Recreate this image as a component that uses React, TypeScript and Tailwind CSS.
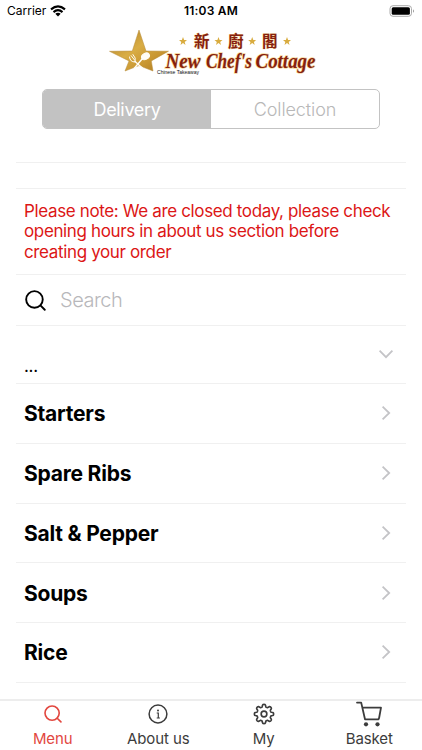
import { useState } from "react";
import clsx from "clsx";

interface IconProps {
  className?: string;
}

const categories = ["Starters", "Spare Ribs", "Salt & Pepper", "Soups", "Rice"];

// closed outline with eight soft teeth around a 24x24 centre
const gearPath = (() => {
  const points: string[] = [];
  for (let i = 0; i < 144; i++) {
    const angle = (i / 144) * Math.PI * 2;
    const wave = Math.tanh(2 * Math.cos(angle * 8)) / Math.tanh(2);
    const r = 9.1 + wave * 1.35;
    points.push(`${(12 + r * Math.sin(angle)).toFixed(2)} ${(12 - r * Math.cos(angle)).toFixed(2)}`);
  }
  return `M${points.join("L")}Z`;
})();

const SearchIcon = ({ className }: IconProps) => (
  <svg viewBox="0 0 20 20" fill="none" stroke="currentColor" strokeWidth="1.8" strokeLinecap="round" className={className}>
    <circle cx="9" cy="9" r="7.9" />
    <path d="M14.7 14.7L18.8 18.8" />
  </svg>
);

const InfoIcon = ({ className }: IconProps) => (
  <svg viewBox="0 0 20 20" fill="none" stroke="currentColor" strokeWidth="1.5" className={className}>
    <circle cx="10" cy="10" r="8.9" />
    <path d="M8.7 9H10.3V14M8.7 14H11.9" strokeWidth="1.2" />
    <circle cx="10" cy="6.4" r="1" fill="currentColor" stroke="none" />
  </svg>
);

const GearIcon = ({ className }: IconProps) => (
  <svg viewBox="0 0 24 24" fill="none" stroke="currentColor" strokeWidth="1.8" strokeLinejoin="round" className={className}>
    <path d={gearPath} />
    <circle cx="12" cy="12" r="3.1" />
  </svg>
);

const CartIcon = ({ className }: IconProps) => (
  <svg viewBox="0 0 26 26" fill="none" stroke="currentColor" strokeWidth="1.8" strokeLinejoin="round" strokeLinecap="round" className={className}>
    <path d="M1 1.6H5.2L9 18.3H22.5M6.4 6.7H25L23.1 17Q22.9 18.3 21.6 18.3" />
    <circle cx="10" cy="23.3" r="2.1" fill="currentColor" stroke="none" />
    <circle cx="21.5" cy="23.3" r="2.1" fill="currentColor" stroke="none" />
  </svg>
);

const Chevron = ({ className }: IconProps) => (
  <svg viewBox="0 0 16 16" fill="none" stroke="#c4c4c7" strokeWidth="1.8" className={className}>
    <path d="M4.6 1.6L11.2 8L4.6 14.4" />
  </svg>
);

const Logo = () => (
  <svg viewBox="-4 0 220 54" className="h-[54px] w-[220px]">
    <defs>
      <linearGradient id="gold" x1="0" y1="0" x2="1" y2="1">
        <stop offset="0" stopColor="#a87922" />
        <stop offset="0.45" stopColor="#d9ad45" />
        <stop offset="0.7" stopColor="#c99732" />
        <stop offset="1" stopColor="#aa781e" />
      </linearGradient>
    </defs>
    <path d="M34 3L41 24L63.5 24.2L46.3 33.9L48 44L34 38.6L20 44L24 33.9L4.5 24.3L27.3 24Z" fill="url(#gold)" stroke="#b68b38" strokeWidth="0.5" />
    <g fill="#fffdf6" stroke="#fffdf6" strokeLinecap="round">
      <ellipse cx="40.5" cy="29.3" rx="4.2" ry="3" transform="rotate(-30 40.5 29.3)" />
      <path d="M37.5 31.5L29.5 41" strokeWidth="1.4" />
      <path d="M30 34.5L38.5 42" strokeWidth="1.4" />
      <path d="M24.5 30Q25 35 30 35Q31.5 31 28 27.5M26.2 28.7L29.5 33" fill="none" strokeWidth="1" />
    </g>
    {[78, 113.5, 147.2, 182].map((x) => (
      <path key={x} transform={`translate(${x} 14.2)`} d="M0 -4.2L1.1 -1.2L4 -1.2L1.7 0.7L2.5 3.7L0 1.9L-2.5 3.7L-1.7 0.7L-4 -1.2L-1.1 -1.2Z" fill="#d9ac3f" />
    ))}
    <g fill="#86200f" stroke="#f6d797" strokeWidth="0.7" paintOrder="stroke">
      <g className="font-['Noto_Sans_CJK_TC',sans-serif] text-[15.5px] font-bold">
        <text x="89" y="20.3">新</text>
        <text x="123" y="20.3">廚</text>
        <text x="157" y="20.3">閣</text>
      </g>
      <g className="font-['Liberation_Serif',serif] text-[20.5px] font-bold italic" strokeWidth="1.4">
        <text x="60.5" y="41.2" textLength="35" lengthAdjust="spacingAndGlyphs">New</text>
        <text x="101" y="41.2" textLength="46" lengthAdjust="spacingAndGlyphs">Chef's</text>
        <text x="150.5" y="41.2" textLength="60" lengthAdjust="spacingAndGlyphs">Cottage</text>
      </g>
    </g>
    <text x="52" y="46.6" textLength="42" fill="#111" className="font-['Liberation_Sans',sans-serif] text-[5px]">Chinese Takeaway</text>
  </svg>
);

const StatusBar = () => (
  <div className="grid h-[22px] grid-cols-3 items-center px-[7px] text-[12px]">
    <div className="flex items-center gap-1">
      <span>Carrier</span>
      <svg viewBox="0 0 16 12" className="h-[12px] w-4">
        <g fill="none" stroke="#000" strokeWidth="2.1">
          <path d="M1 4.4Q8 -1.7 15 4.4" />
          <path d="M3.5 7.1Q8 3.1 12.5 7.1" />
        </g>
        <path d="M5.3 8.8Q8 6.8 10.7 8.8L8 11.5Z" />
      </svg>
    </div>
    <span className="text-center font-semibold tracking-[0.2px]">11:03 AM</span>
    <svg viewBox="0 0 26 12" className="h-3 w-[26px] justify-self-end">
      <rect x="1" y="0.7" width="21.5" height="10.6" rx="3" fill="#fff" stroke="#aaa" />
      <rect x="2.7" y="2.3" width="18.2" height="7.4" rx="1.5" />
      <path d="M24 4.2Q26 6 24 7.8Z" fill="#999" />
    </svg>
  </div>
);

const tabs = [
  { name: "Menu", icon: <SearchIcon className="h-[18px] w-[18px]" /> },
  { name: "About us", icon: <InfoIcon className="h-5 w-5" /> },
  { name: "My", icon: <GearIcon className="h-[22px] w-[22px]" /> },
  { name: "Basket", icon: <CartIcon className="h-[26px] w-[26px]" /> },
];

export default function App() {
  const [mode, setMode] = useState("Delivery");
  const [activeTab, setActiveTab] = useState("Menu");

  return (
    <div className="flex h-[750px] w-[422px] flex-col overflow-hidden bg-white font-[Inter,sans-serif] text-black">
      <StatusBar />
      <header className="flex flex-col items-center">
        <div className="mt-[5px]">
          <Logo />
        </div>
        <div className="mt-[8px] grid h-10 w-[338px] grid-cols-2 overflow-hidden rounded-[5px] border border-[#c3c3c3]">
          {["Delivery", "Collection"].map((name) => (
            <button
              key={name}
              onClick={() => setMode(name)}
              className={clsx("text-[18px]", mode === name ? "bg-[#c2c2c2] font-normal tracking-[-0.35px] text-white" : "font-light tracking-[-0.1px] text-[#b8b8b8]")}
            >
              {name}
            </button>
          ))}
        </div>
      </header>

      <main className="mx-4 mt-[33px] flex-1 overflow-hidden border-t border-[#f0f0f0]">
        <div className="h-[25px]" />
        <p className="h-[87px] whitespace-nowrap border-y border-[#f0f0f0] px-2 pt-[12px] text-[17px] leading-[20.3px] tracking-[-0.36px] text-[#dc1616]">
          Please note: We are closed today, please check
          <br />
          opening hours in about us section before
          <br />
          creating your order
        </p>
        <div className="flex h-[51px] items-center border-b border-[#f0f0f0] pl-[9px]">
          <SearchIcon className="h-[21px] w-[21px]" />
          <input placeholder="Search" className="ml-[14px] w-60 text-[20px] font-light tracking-[-0.5px] outline-none placeholder:text-[#b8b8bb]" />
        </div>
        <div className="flex h-[58px] justify-between border-b border-[#f0f0f0] pl-2 pr-[12px]">
          <span className="self-end pb-[7px] text-[17px] leading-5 tracking-[-0.3px]">...</span>
          <Chevron className="mt-[20px] h-4 w-4 rotate-90" />
        </div>
        {categories.map((name) => (
          <div key={name} className="flex h-[59.75px] items-center justify-between border-b border-[#f0f0f0] pl-2 pr-[12px]">
            <span className="pt-[1.5px] text-[21px] font-bold tracking-[-0.22px]">{name}</span>
            <Chevron className="h-4 w-4" />
          </div>
        ))}
      </main>

      <nav className="grid h-[51px] grid-cols-4 border-t-2 border-[#ededed]">
        {tabs.map((tab) => (
          <button
            key={tab.name}
            onClick={() => setActiveTab(tab.name)}
            className={clsx("flex flex-col items-center", activeTab === tab.name ? "text-[#e2473f]" : "text-[#3c3c3c]")}
          >
            <span className="flex h-[26px] items-center">{tab.icon}</span>
            <span className="text-[15px] leading-[23px] tracking-[-0.1px]">{tab.name}</span>
          </button>
        ))}
      </nav>
    </div>
  );
}
